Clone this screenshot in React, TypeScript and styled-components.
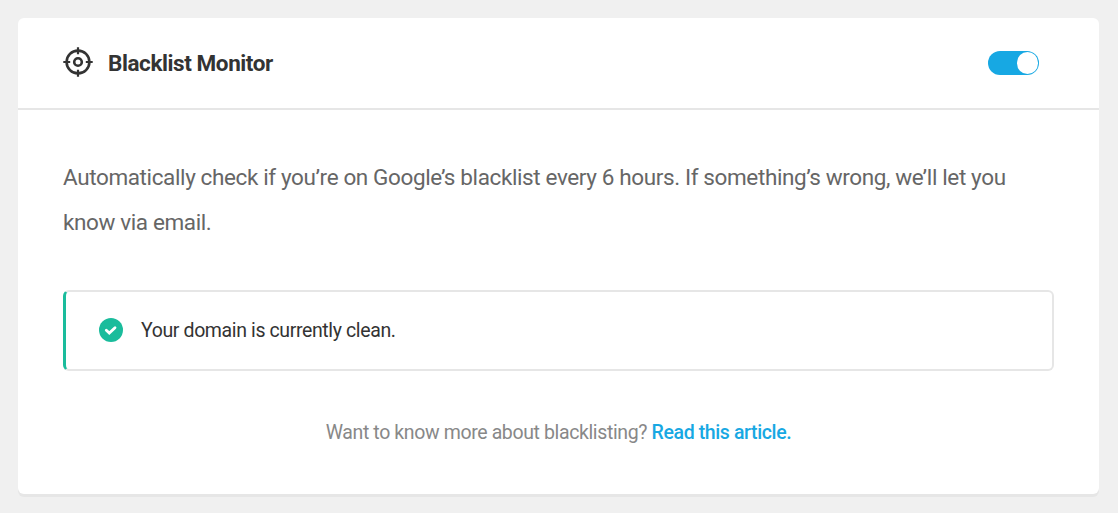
import { useState } from "react";
import styled, { createGlobalStyle } from "styled-components";

const App = () => {
  const [isActive, setIsActive] = useState(true);

  return (
    <>
      <GlobalStyle />
      <Box>
        <Header>
          <TargetIcon />
          <Title>Blacklist Monitor</Title>
          <Toggle
            type="button"
            role="switch"
            aria-checked={isActive}
            aria-label="Blacklist Monitor"
            $isActive={isActive}
            onClick={() => setIsActive(!isActive)}
          >
            <Knob />
          </Toggle>
        </Header>
        <Body>
          <Description>
            Automatically check if you’re on Google’s blacklist every 6 hours. If
            something’s wrong, we’ll let you know via email.
          </Description>
          <Notice>
            <CheckIcon />
            <NoticeText>Your domain is currently clean.</NoticeText>
          </Notice>
          <Footnote>
            Want to know more about blacklisting?{" "}
            <Link href="#">Read this article.</Link>
          </Footnote>
        </Body>
      </Box>
    </>
  );
};

export default App;

const TargetIcon = () => (
  <svg width="30" height="30" viewBox="0 0 30 30" fill="none" stroke="#333" strokeWidth="2.6">
    <circle cx="15" cy="15" r="11.4" />
    <circle cx="15" cy="15" r="3.8" />
    <path d="M15 .3v6.9M15 22.8v6.9M.3 15h6.9M22.8 15h6.9" strokeWidth="2.2" />
  </svg>
);

const CheckIcon = () => (
  <CheckSvg width="24" height="24" viewBox="0 0 24 24" fill="none">
    <circle cx="12" cy="12" r="12" fill="#1abc9c" />
    <path
      d="M7.3 12.3l3 2.8 5.7-5.4"
      stroke="#fff"
      strokeWidth="2.8"
      strokeLinecap="round"
    />
  </CheckSvg>
);

const GlobalStyle = createGlobalStyle`
  * {
    box-sizing: border-box;
  }

  body {
    margin: 0;
    padding: 18px 19px 18px 18px;
    background-color: #f0f0f0;
    font-family: Roboto, sans-serif;
  }
`;

const Box = styled.section`
  height: 476px;
  border-radius: 6px;
  background-color: #fff;
  box-shadow: 0 3px 0 #e6e6e6;
`;

const Header = styled.header`
  display: flex;
  align-items: center;
  height: 92px;
  padding: 0 60px 0 45px;
  border-bottom: 2px solid #e6e6e6;

  > svg {
    margin-bottom: 2px;
  }
`;

const Title = styled.h3`
  margin: 0 auto 0 15px;
  color: #333;
  font-size: 22.5px;
  font-weight: 700;
  line-height: 45px;
  letter-spacing: -0.42px;
`;

const Toggle = styled.button<{ $isActive: boolean }>`
  display: flex;
  align-items: center;
  justify-content: ${({ $isActive }) => ($isActive ? "flex-end" : "flex-start")};
  width: 51px;
  height: 24px;
  padding: 1px;
  border: none;
  border-radius: 12px;
  background-color: ${({ $isActive }) => ($isActive ? "#17a8e3" : "#aaa")};
  cursor: pointer;
`;

const Knob = styled.span`
  width: 21.5px;
  height: 21.5px;
  border-radius: 50%;
  background-color: #fff;
`;

const Body = styled.div`
  padding: 45px;
`;

const Description = styled.p`
  margin: 0 0 45px;
  color: #666;
  font-size: 22.5px;
  line-height: 45px;
  letter-spacing: -0.38px;
`;

const Notice = styled.div`
  display: flex;
  align-items: center;
  gap: 18px;
  height: 81px;
  padding-left: 33px;
  border: 2px solid #e6e6e6;
  border-left: 3px solid #1abc9c;
  border-radius: 6px;
`;

const CheckSvg = styled.svg`
  margin-bottom: 2px;
`;

const NoticeText = styled.span`
  color: #333;
  font-size: 19.5px;
  line-height: 33px;
  letter-spacing: -0.38px;
`;

const Footnote = styled.p`
  margin: 45px 0 0;
  color: #888;
  font-size: 19.5px;
  line-height: 33px;
  letter-spacing: -0.38px;
  text-align: center;
`;

const Link = styled.a`
  color: #17a8e3;
  font-weight: 500;
  text-decoration: none;
`;
